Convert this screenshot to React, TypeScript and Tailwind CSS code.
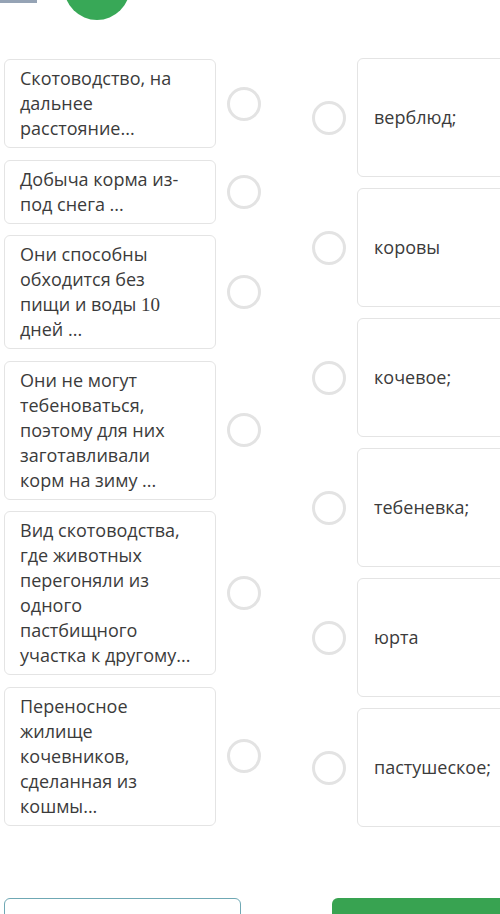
import React from 'react';

const left: React.ReactNode[] = [
  'Скотоводство, на дальнее расстояние...',
  'Добыча корма из-под снега ...',
  <>
    Они способны обходится без пищи и воды{' '}
    <span className="font-['Liberation_Serif',serif] text-[19px] leading-[25px]">10</span> дней ...
  </>,
  'Они не могут тебеноваться, поэтому для них заготавливали корм на зиму ...',
  'Вид скотоводства, где животных перегоняли из одного пастбищного участка к другому...',
  'Переносное жилище кочевников, сделанная из кошмы...',
];

const right = ['верблюд;', 'коровы', 'кочевое;', 'тебеневка;', 'юрта', 'пастушеское;'];

function Radio() {
  return <div className="w-[34px] h-[34px] shrink-0 rounded-full border-[3px] border-[#e3e3e3] bg-white" />;
}

export default function App() {
  return (
    <div className="w-[500px] h-[914px] overflow-hidden bg-white text-[#3b3b3b] font-['Open_Sans',sans-serif]">
      <div className="h-[20px] overflow-hidden flex items-start">
        <div className="w-[37px] h-[3px] bg-[#95a3b5]" />
        <div className="w-[66px] h-[66px] mt-[-46px] ml-[27px] rounded-full bg-[#38a857]" />
      </div>

      <div className="flex mt-[38px]">
        <div className="flex flex-col gap-[11.5px] mt-px pl-[4px]">
          {left.map((t, i) => (
            <div key={i} className="flex items-center gap-[11px]">
              <div className="w-[212px] rounded-[6px] border border-[#e4e4e4] pl-[15px] pr-[20px] py-[6px] text-[18px] leading-[25px]">
                {t}
              </div>
              <Radio />
            </div>
          ))}
        </div>

        <div className="flex flex-col gap-[11px] ml-[51px]">
          {right.map((t) => (
            <div key={t} className="flex items-center gap-[11px]">
              <Radio />
              <div className="w-[200px] h-[119px] rounded-[6px] border border-[#e4e4e4] pl-[16px] flex items-center text-[18px]">
                {t}
              </div>
            </div>
          ))}
        </div>
      </div>

      <div className="flex justify-between mt-[71px] pl-[4px]">
        <div className="w-[237px] h-[48px] rounded-[6px] border border-[#6fa8b4] bg-white" />
        <div className="w-[168px] h-[48px] rounded-l-[6px] bg-[#38a351]" />
      </div>
    </div>
  );
}
